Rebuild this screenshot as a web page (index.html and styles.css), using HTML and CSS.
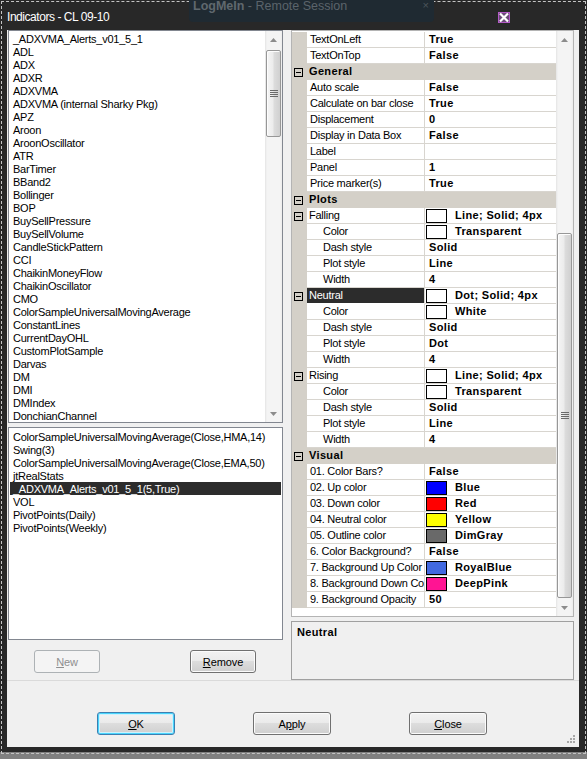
FILE: index.html
```html
<!DOCTYPE html>
<html>
<head>
<meta charset="utf-8">
<title>Indicators - CL 09-10</title>
<link rel="stylesheet" href="styles.css">
</head>
<body>
<div class="screen">
  <div class="frame">
    <div class="titlebar">
      <span class="title">Indicators - CL 09-10</span>
      <svg class="closebox" width="12" height="11" viewBox="0 0 12 11">
        <rect x="0.5" y="0.5" width="11" height="10" fill="#6b4a78" stroke="#b45ac8"/>
        <path d="M2 1.5 L10 9.5 M10 1.5 L2 9.5" stroke="#fff" stroke-width="2.2"/>
      </svg>
    </div>

    <div class="client">
      <div class="split">
        <div class="leftpane">
          <div class="listbox available">
            <ul class="items">
              <li>_ADXVMA_Alerts_v01_5_1</li>
              <li>ADL</li>
              <li>ADX</li>
              <li>ADXR</li>
              <li>ADXVMA</li>
              <li>ADXVMA (internal Sharky Pkg)</li>
              <li>APZ</li>
              <li>Aroon</li>
              <li>AroonOscillator</li>
              <li>ATR</li>
              <li>BarTimer</li>
              <li>BBand2</li>
              <li>Bollinger</li>
              <li>BOP</li>
              <li>BuySellPressure</li>
              <li>BuySellVolume</li>
              <li>CandleStickPattern</li>
              <li>CCI</li>
              <li>ChaikinMoneyFlow</li>
              <li>ChaikinOscillator</li>
              <li>CMO</li>
              <li>ColorSampleUniversalMovingAverage</li>
              <li>ConstantLines</li>
              <li>CurrentDayOHL</li>
              <li>CustomPlotSample</li>
              <li>Darvas</li>
              <li>DM</li>
              <li>DMI</li>
              <li>DMIndex</li>
              <li>DonchianChannel</li>
            </ul>
            <div class="vscroll">
              <div class="arrow"><svg width="7" height="4" viewBox="0 0 7 4"><path d="M0 4 L3.5 0 L7 4 Z" fill="#8c8c8c"/></svg></div>
              <div class="track">
                <div class="thumb thumb-list">
                  <svg width="8" height="7" viewBox="0 0 8 7"><path d="M0 0.5 H8 M0 2.5 H8 M0 4.5 H8 M0 6.5 H8" stroke="#6a6a6a"/></svg>
                </div>
              </div>
              <div class="arrow"><svg width="7" height="4" viewBox="0 0 7 4"><path d="M0 0 L3.5 4 L7 0 Z" fill="#8c8c8c"/></svg></div>
            </div>
          </div>

          <div class="listbox applied">
            <ul class="items">
              <li>ColorSampleUniversalMovingAverage(Close,HMA,14)</li>
              <li>Swing(3)</li>
              <li>ColorSampleUniversalMovingAverage(Close,EMA,50)</li>
              <li>jtRealStats</li>
              <li class="selected">_ADXVMA_Alerts_v01_5_1(5,True)</li>
              <li>VOL</li>
              <li>PivotPoints(Daily)</li>
              <li>PivotPoints(Weekly)</li>
            </ul>
          </div>

          <div class="panebuttons">
            <button class="btn small" disabled><u>N</u>ew</button>
            <button class="btn small"><u>R</u>emove</button>
          </div>
        </div>

        <div class="rightpane">
          <div class="propgrid">
            <div class="rows">
              <div class="row"><span class="g"></span><span class="n">TextOnLeft</span><span class="v">True</span></div>
              <div class="row"><span class="g"></span><span class="n">TextOnTop</span><span class="v">False</span></div>
              <div class="row cat"><span class="g"><i class="box"></i></span><span class="n">General</span></div>
              <div class="row"><span class="g"></span><span class="n">Auto scale</span><span class="v">False</span></div>
              <div class="row"><span class="g"></span><span class="n">Calculate on bar close</span><span class="v">True</span></div>
              <div class="row"><span class="g"></span><span class="n">Displacement</span><span class="v">0</span></div>
              <div class="row"><span class="g"></span><span class="n">Display in Data Box</span><span class="v">False</span></div>
              <div class="row"><span class="g"></span><span class="n">Label</span><span class="v"></span></div>
              <div class="row"><span class="g"></span><span class="n">Panel</span><span class="v">1</span></div>
              <div class="row"><span class="g"></span><span class="n">Price marker(s)</span><span class="v">True</span></div>
              <div class="row cat"><span class="g"><i class="box"></i></span><span class="n">Plots</span></div>
              <div class="row"><span class="g"><i class="box"></i></span><span class="n grp">Falling</span><span class="v sw"><i class="swatch"></i>Line; Solid; 4px</span></div>
              <div class="row"><span class="g"></span><span class="n sub">Color</span><span class="v sw"><i class="swatch"></i>Transparent</span></div>
              <div class="row"><span class="g"></span><span class="n sub">Dash style</span><span class="v">Solid</span></div>
              <div class="row"><span class="g"></span><span class="n sub">Plot style</span><span class="v">Line</span></div>
              <div class="row"><span class="g"></span><span class="n sub">Width</span><span class="v">4</span></div>
              <div class="row"><span class="g"><i class="box"></i></span><span class="n grp selected">Neutral</span><span class="v sw"><i class="swatch"></i>Dot; Solid; 4px</span></div>
              <div class="row"><span class="g"></span><span class="n sub">Color</span><span class="v sw"><i class="swatch"></i>White</span></div>
              <div class="row"><span class="g"></span><span class="n sub">Dash style</span><span class="v">Solid</span></div>
              <div class="row"><span class="g"></span><span class="n sub">Plot style</span><span class="v">Dot</span></div>
              <div class="row"><span class="g"></span><span class="n sub">Width</span><span class="v">4</span></div>
              <div class="row"><span class="g"><i class="box"></i></span><span class="n grp">Rising</span><span class="v sw"><i class="swatch"></i>Line; Solid; 4px</span></div>
              <div class="row"><span class="g"></span><span class="n sub">Color</span><span class="v sw"><i class="swatch"></i>Transparent</span></div>
              <div class="row"><span class="g"></span><span class="n sub">Dash style</span><span class="v">Solid</span></div>
              <div class="row"><span class="g"></span><span class="n sub">Plot style</span><span class="v">Line</span></div>
              <div class="row"><span class="g"></span><span class="n sub">Width</span><span class="v">4</span></div>
              <div class="row cat"><span class="g"><i class="box"></i></span><span class="n">Visual</span></div>
              <div class="row"><span class="g"></span><span class="n">01. Color Bars?</span><span class="v">False</span></div>
              <div class="row"><span class="g"></span><span class="n">02. Up color</span><span class="v sw"><i class="swatch c-blue"></i>Blue</span></div>
              <div class="row"><span class="g"></span><span class="n">03. Down color</span><span class="v sw"><i class="swatch c-red"></i>Red</span></div>
              <div class="row"><span class="g"></span><span class="n">04. Neutral color</span><span class="v sw"><i class="swatch c-yellow"></i>Yellow</span></div>
              <div class="row"><span class="g"></span><span class="n">05. Outline color</span><span class="v sw"><i class="swatch c-dimgray"></i>DimGray</span></div>
              <div class="row"><span class="g"></span><span class="n">6. Color Background?</span><span class="v">False</span></div>
              <div class="row"><span class="g"></span><span class="n">7. Background Up Color</span><span class="v sw"><i class="swatch c-royalblue"></i>RoyalBlue</span></div>
              <div class="row"><span class="g"></span><span class="n">8. Background Down Color</span><span class="v sw"><i class="swatch c-deeppink"></i>DeepPink</span></div>
              <div class="row"><span class="g"></span><span class="n">9. Background Opacity</span><span class="v">50</span></div>
            </div>
            <div class="vscroll">
              <div class="arrow"><svg width="7" height="4" viewBox="0 0 7 4"><path d="M0 4 L3.5 0 L7 4 Z" fill="#8c8c8c"/></svg></div>
              <div class="track">
                <div class="thumb thumb-grid">
                  <svg width="8" height="7" viewBox="0 0 8 7"><path d="M0 0.5 H8 M0 2.5 H8 M0 4.5 H8 M0 6.5 H8" stroke="#6a6a6a"/></svg>
                </div>
              </div>
              <div class="arrow"><svg width="7" height="4" viewBox="0 0 7 4"><path d="M0 0 L3.5 4 L7 0 Z" fill="#8c8c8c"/></svg></div>
            </div>
          </div>
          <div class="description"><b>Neutral</b></div>
        </div>
      </div>

      <div class="footer">
        <div class="dialogbuttons">
          <button class="btn default"><u>O</u>K</button>
          <button class="btn">A<u>p</u>ply</button>
          <button class="btn"><u>C</u>lose</button>
        </div>
        <svg class="sizegrip" width="11" height="11" viewBox="0 0 11 11">
          <g fill="#a8a8a8">
            <rect x="9" y="1" width="2" height="2"/>
            <rect x="6" y="4" width="2" height="2"/><rect x="9" y="4" width="2" height="2"/>
            <rect x="3" y="7" width="2" height="2"/><rect x="6" y="7" width="2" height="2"/><rect x="9" y="7" width="2" height="2"/>
          </g>
        </svg>
      </div>
    </div>
  </div>

  <div class="outline"></div>
  <div class="remote"><b>LogMeIn</b> - Remote Session<span class="remote-x">×</span></div>
</div>
</body>
</html>
```

FILE: styles.css
```css
* { box-sizing: border-box; }

html, body {
  margin: 0;
  padding: 0;
}

body {
  width: 587px;
  height: 759px;
  overflow: hidden;
  background: #808080;
  font-family: "Liberation Sans", Arial, sans-serif;
  font-size: 11px;
  letter-spacing: -0.25px;
  color: #000;
}

b, .row .v, .row.cat .n {
  letter-spacing: 0.35px;
}

.screen {
  position: relative;
  width: 587px;
  height: 759px;
}

/* window frame */
.frame {
  width: 587px;
  height: 752px;
  background: #282828;
  display: flex;
  flex-direction: column;
  padding-bottom: 5px;
}

.titlebar {
  height: 30px;
  flex: none;
  display: flex;
  align-items: flex-start;
  padding: 10px 0 0 7px;
  color: #fff;
  font-size: 12px;
  letter-spacing: -0.45px;
  line-height: 14px;
}

.closebox {
  margin: 2px 77px 0 auto;
}

.client {
  flex: 1;
  margin: 0 8px 0 7px;
  background: #f0f0f0;
  display: flex;
  flex-direction: column;
}

.split {
  height: 651px;
  display: flex;
  border-bottom: 1px solid #dadada;
}

/* left pane: available and applied indicators */
.leftpane {
  width: 279px;
  padding: 0 3px 0 1px;
  display: flex;
  flex-direction: column;
}

.listbox {
  border: 1px solid #828790;
  background: #fff;
  display: flex;
}

.listbox.available { height: 393px; }

.listbox.applied {
  height: 213px;
  margin-top: 4px;
}

.items {
  list-style: none;
  margin: 0;
  padding: 1px 0 0 4px;
  flex: 1;
  overflow: hidden;
}

.items li {
  height: 13px;
  padding-top: 1px;
  line-height: 13px;
  white-space: nowrap;
}

.applied .items {
  padding: 2px 0 0 0;
}

.applied .items li {
  margin: 0 1px;
  padding-left: 3px;
}

.items li.selected {
  background: #2c2c2c;
  color: #fff;
}

.panebuttons {
  display: flex;
  gap: 90px;
  margin-top: 10px;
  padding-left: 26px;
}

/* scrollbars */
.vscroll {
  width: 17px;
  flex: none;
  display: flex;
  flex-direction: column;
  background: linear-gradient(to right, #e4e4e4, #f4f4f4 2px, #f4f4f4 15px, #ececec);
}

.arrow {
  height: 17px;
  display: flex;
  align-items: center;
  justify-content: center;
}

.track {
  flex: 1;
  padding: 0 1px;
}

.thumb {
  border: 1px solid #979797;
  border-radius: 2px;
  background: linear-gradient(to right, #f5f5f5, #ececec 45%, #dcdcdc 55%, #d0d0d0);
  box-shadow: inset 1px 1px 0 #fdfdfd;
  display: flex;
  align-items: center;
  justify-content: center;
}

.thumb-list {
  margin-top: 2px;
  height: 87px;
}

.thumb-grid {
  margin-top: 185px;
  height: 365px;
}

/* right pane: property grid */
.rightpane {
  flex: 1;
  padding: 0 5px 0 5px;
  display: flex;
  flex-direction: column;
}

.propgrid {
  height: 587px;
  border: 1px solid #b4b4b4;
  background: #fff;
  display: flex;
}

.rows {
  flex: 1;
  overflow: hidden;
  padding-top: 1px;
}

.row {
  height: 16px;
  display: grid;
  grid-template-columns: 15px 118px 1fr;
  line-height: 15px;
}

.row .g {
  background: #d4d0c8;
  display: flex;
  align-items: center;
  padding-left: 2px;
}

.row .n {
  padding-left: 3px;
  border-right: 1px solid #d8d5cf;
  border-bottom: 1px solid #d8d5cf;
  white-space: nowrap;
  overflow: hidden;
}

.row .n.grp { padding-left: 2px; }
.row .n.sub { padding-left: 16px; }

.row .n.selected {
  background: #2c2c2c;
  color: #fff;
  border-bottom-color: #fff;
}

.row .v {
  padding-left: 4px;
  border-bottom: 1px solid #d8d5cf;
  font-weight: bold;
  white-space: nowrap;
  overflow: hidden;
  display: flex;
  align-items: center;
}

.row .v.sw { padding-left: 1px; }

.swatch {
  width: 21px;
  height: 14px;
  border: 1px solid #000;
  background: #fff;
  margin-right: 8px;
  flex: none;
}

.c-blue { background: #0000ff; }
.c-red { background: #ff0000; }
.c-yellow { background: #ffff00; }
.c-dimgray { background: #696969; }
.c-royalblue { background: #4169e1; }
.c-deeppink { background: #ff1493; }

.row.cat {
  grid-template-columns: 15px 1fr;
  background: #d4d0c8;
}

.row.cat .n {
  border: none;
  font-weight: bold;
  padding-left: 2px;
}

/* collapse box ⊟ */
.box {
  width: 9px;
  height: 9px;
  border: 1px solid #000;
  position: relative;
  display: block;
}

.box::after {
  content: "";
  position: absolute;
  left: 1px;
  top: 3px;
  width: 5px;
  height: 1px;
  background: #000;
}

.description {
  margin-top: 4px;
  height: 59px;
  border: 1px solid #a0a0a0;
  padding: 4px 5px;
  line-height: 13px;
}

/* dialog buttons */
.footer {
  flex: 1;
  display: flex;
}

.dialogbuttons {
  display: flex;
  gap: 78px;
  padding: 31px 0 0 90px;
}

.sizegrip {
  margin: auto 4px 2px auto;
}

.btn {
  width: 78px;
  height: 23px;
  padding: 0;
  border: 1px solid #707070;
  border-radius: 3px;
  background: linear-gradient(#f2f2f2, #ebebeb 45%, #dddddd 50%, #cfcfcf);
  box-shadow: inset 0 0 0 1px #fbfbfb;
  font-family: "Liberation Sans", Arial, sans-serif;
  font-size: 11px;
  letter-spacing: -0.1px;
  color: #000;
}

.btn.small {
  width: 66px;
}

.btn.default {
  border-color: #3c7fb1;
  box-shadow: inset 0 0 0 1px #48d4fc, inset 0 0 0 2px #cdf1fd;
}

.btn:disabled {
  border-color: #adb2b5;
  background: #f4f4f4;
  box-shadow: none;
  color: #8f8f8f;
}

/* dashed frame of the remote view */
.outline {
  position: absolute;
  left: 1px;
  top: 1px;
  width: 585px;
  height: 753px;
  border: 1px dashed #c4c4c4;
  pointer-events: none;
}

/* remote session banner */
.remote {
  position: absolute;
  left: 189px;
  top: 0;
  width: 245px;
  height: 22px;
  padding: 0 0 0 4px;
  background: #1f2a32;
  border-radius: 0 0 4px 4px;
  color: #5b646b;
  font-size: 12.5px;
  letter-spacing: 0;
  line-height: 13px;
  white-space: nowrap;
}

.remote b {
  color: #5f686e;
  letter-spacing: 0;
}

.remote-x {
  position: absolute;
  right: 5px;
  top: -1px;
  font-size: 11px;
  color: #4c555b;
}
```
